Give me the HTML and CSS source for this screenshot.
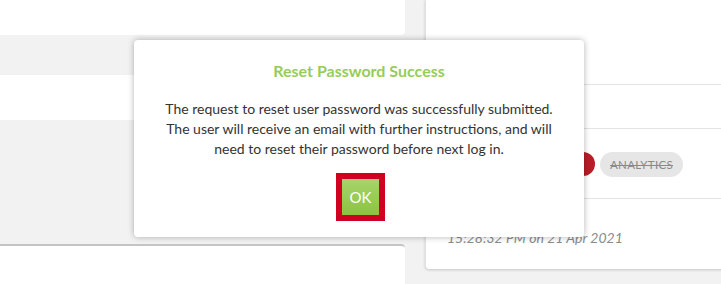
FILE: index.html
```html
<!DOCTYPE html>
<html>
<head>
<meta charset="utf-8">
<link rel="stylesheet" href="styles.css">
</head>
<body>
<div class="page">
  <div class="left">
    <div class="panel-top"></div>
    <div class="band"></div>
    <div class="panel-bottom"></div>
  </div>
  <div class="right">
    <div class="card">
      <div class="row row-1"></div>
      <div class="row row-2"></div>
      <div class="row row-tags">
        <span class="badge"></span>
        <span class="pill">Analytics</span>
      </div>
      <div class="row row-time">
        <span class="time">15:28:32 PM on 21 Apr 2021</span>
      </div>
    </div>
  </div>
</div>
<div class="modal">
  <h2 class="modal-title">Reset Password Success</h2>
  <p class="modal-body">The request to reset user password was successfully submitted.<br>The user will receive an email with further instructions, and will<br>need to reset their password before next log in.</p>
  <div class="modal-actions">
    <button class="btn-ok">OK</button>
  </div>
</div>
</body>
</html>
```
FILE: styles.css
```css
* { box-sizing: border-box; }
html, body {
  margin: 0;
  padding: 0;
  width: 721px;
  height: 284px;
  overflow: hidden;
  background: #f2f2f2;
  font-family: Lato, "Liberation Sans", sans-serif;
}
.page {
  display: flex;
  gap: 20px;
  height: 284px;
}
.left {
  width: 405px;
  flex: none;
  display: flex;
  flex-direction: column;
}
.panel-top {
  height: 35px;
  background: #fff;
  border-bottom-right-radius: 4px;
}
.band {
  margin-top: 40px;
  height: 45px;
  background: #fff;
}
.panel-bottom {
  margin-top: 124px;
  flex: 1;
  background: #fff;
  border-top: 2px solid #c4c4c4;
  border-top-right-radius: 4px;
}
.right {
  flex: 1;
  min-width: 0;
}
.card {
  width: 320px;
  height: 269px;
  background: #fff;
  border-left: 1px solid #e2e2e2;
  border-bottom-left-radius: 4px;
  box-shadow: 0 1px 3px rgba(0,0,0,0.18);
  display: flex;
  flex-direction: column;
}
.row { border-bottom: 1px solid #e4e4e4; }
.row-1 { height: 85px; }
.row-2 { height: 44px; }
.row-tags {
  height: 70px;
  display: flex;
  align-items: center;
  gap: 5px;
  padding-left: 145px;
  padding-top: 1px;
}
.badge {
  width: 24px;
  height: 24px;
  border-radius: 50%;
  background: #b81d27;
}
.pill {
  height: 25px;
  padding: 0 10px;
  border-radius: 13px;
  background: #e6e6e6;
  color: #8a8a8a;
  font-size: 11.5px;
  text-transform: uppercase;
  text-decoration: line-through;
  display: flex;
  align-items: center;
  letter-spacing: 0.3px;
}
.row-time {
  border-bottom: none;
  flex: 1;
  padding: 28px 0 0 21px;
}
.time {
  font-style: italic;
  font-size: 14px;
  color: #8a8a8a;
}
.modal {
  position: absolute;
  left: 134px;
  top: 40px;
  width: 450px;
  height: 197px;
  background: #fff;
  border-radius: 4px;
  box-shadow: 0 0 6px rgba(0,0,0,0.3);
  text-align: center;
  padding-top: 21px;
}
.modal-title {
  margin: 0;
  font-size: 16px;
  font-weight: 700;
  color: #97cc5a;
  line-height: 20px;
}
.modal-body {
  margin: 18px 0 0;
  font-size: 14px;
  line-height: 20px;
  color: #333;
}
.modal-actions {
  margin-top: 14px;
  display: flex;
  justify-content: center;
}
.btn-ok {
  width: 49px;
  height: 48px;
  border: 6px solid #cf0022;
  background: linear-gradient(#a6d46c, #8cc43f);
  color: #fff;
  font-family: Lato, "Liberation Sans", sans-serif;
  font-size: 15px;
  padding: 0;
  margin-left: 3px;
}
```
